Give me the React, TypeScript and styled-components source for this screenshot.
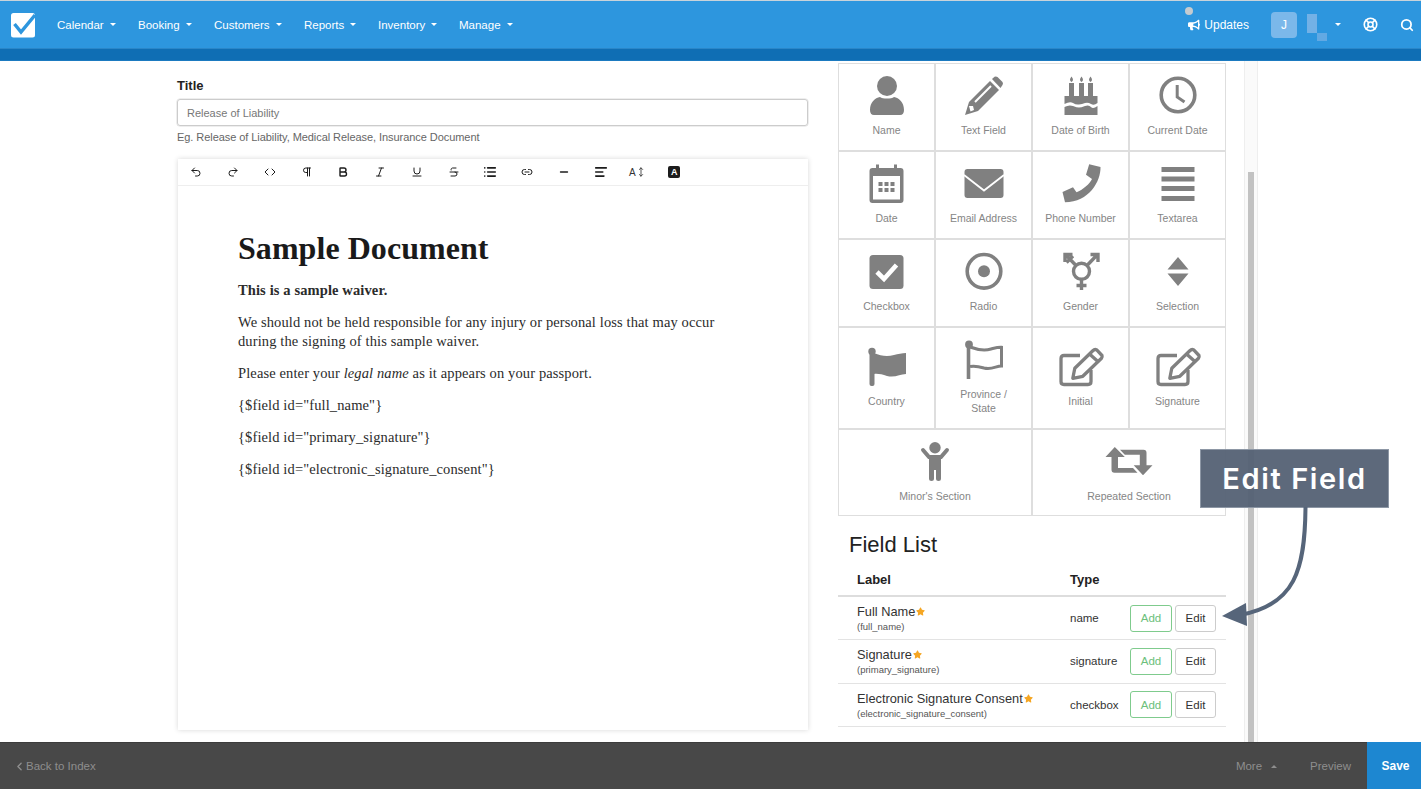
import React from "react";
import styled, { createGlobalStyle } from "styled-components";
import { Undo2, Redo2, Code, Pilcrow, Bold, Italic, Underline, Strikethrough, List, Link2, Minus, AlignLeft, LifeBuoy, Search, ChevronLeft, MoveVertical } from "lucide-react";
import { FaBullhorn, FaStar } from "react-icons/fa";

const Global = createGlobalStyle`
  html, body { margin: 0; padding: 0; background: #fff; }
  body { font-family: "Liberation Sans", Arial, sans-serif; color: #222; overflow: hidden; }
  * { box-sizing: border-box; }
`;

const Root = styled.div`
  position: relative; height: 789px; display: flex; flex-direction: column; overflow: hidden;
`;
const Nav = styled.header`
  height: 48px; flex: none; background: #2d96de; border-top: 1px solid #c9d3da;
  display: flex; align-items: center; padding-left: 11px; color: #fff;
`;
const Logo = styled.svg`width: 25px; height: 26px; margin-right: 21px; flex: none;`;
const Menu = styled.nav`display: flex; align-items: center;`;
const MenuItem = styled.span<{ $w: number }>`
  width: ${p => p.$w}px; font-size: 11.5px; display: flex; align-items: center; gap: 6px; white-space: nowrap;
`;
const Caret = styled.i<{ $up?: boolean; $c?: string }>`
  display: inline-block; width: 0; height: 0;
  border-left: 3.5px solid transparent; border-right: 3.5px solid transparent;
  ${p => p.$up ? `border-bottom: 3.5px solid ${p.$c || "#fff"};` : `border-top: 3.5px solid ${p.$c || "#fff"};`}
`;
const NavRight = styled.div`margin-left: auto; display: flex; align-items: center;`;
const Updates = styled.span`
  position: relative; display: flex; align-items: center; gap: 4px; font-size: 12px; margin-right: 22px;
`;
const Bubble = styled.i`
  position: absolute; left: -3px; top: -11px; width: 8px; height: 8px; border-radius: 50%; background: #c4cbd0;
`;
const Avatar = styled.span`
  width: 26px; height: 26px; border-radius: 4px; background: #7bb8ea; display: flex; align-items: center; justify-content: center;
  font-size: 12px; margin-right: 10px;
`;
const Mosaic = styled.span`
  position: relative; width: 20px; height: 26px; margin-right: 8px;
  &::before { content: ""; position: absolute; left: 0; top: 2px; width: 10px; height: 19px; background: #73b1e6; }
  &::after { content: ""; position: absolute; left: 10px; top: 21px; width: 10px; height: 8px; background: #62a9e3; }
`;
const NavIcon = styled.span<{ $mr: number }>`display: flex; margin-right: ${p => p.$mr}px;`;
const SubBar = styled.div`height: 13px; flex: none; background: #0f6eb4; border-top: 1px solid #2a86c8; border-bottom: 1px solid #1b7ac0;`;

const Main = styled.main`flex: 1; min-height: 0; display: flex; padding-left: 177px; overflow: hidden;`;
const LeftCol = styled.section`width: 631px; flex: none; padding-top: 17px; display: flex; flex-direction: column;`;
const Label = styled.div`font-size: 13px; font-weight: 700; line-height: 15px; color: #222; margin-bottom: 6px;`;
const TitleInput = styled.div`
  height: 27px; border: 1px solid #ccc; border-radius: 3px; padding: 0 9px; display: flex; align-items: center;
  font-size: 11px; color: #777; box-shadow: 0 0 0 .5px #ddd;
`;
const Help = styled.div`font-size: 11px; color: #666; line-height: 13px; margin-top: 5px; margin-bottom: 15px; letter-spacing: -.06px;`;
const Editor = styled.div`
  margin-left: 1px; height: 571px; background: #fff; box-shadow: 0 0 5px rgba(0,0,0,.16); display: flex; flex-direction: column;
`;
const Toolbar = styled.div`
  height: 27px; flex: none; display: flex; align-items: center; padding-left: 0; border-bottom: 1px solid #eee;
`;
const Tool = styled.span`
  width: 36.75px; display: flex; align-items: center; justify-content: center; color: #1c1c1c; font-size: 10px; font-weight: 700;
`;
const FontTool = styled(Tool)`gap: 0; font-weight: 400; color: #333;`;
const Highlight = styled.span`
  width: 12px; height: 12px; border-radius: 2px; background: #1c1c1c; color: #fff; font-size: 9px; font-weight: 700;
  display: flex; align-items: center; justify-content: center;
`;
const Doc = styled.div`
  padding: 44px 0 0 60px; font-family: "Liberation Serif", "Times New Roman", serif; color: #2b2b2b;
`;
const Heading = styled.h1`
  margin: 0 0 15px; font-size: 32px; line-height: 36px; font-weight: 700; color: #1a1a1a; letter-spacing: .05px;
`;
const Para = styled.p`
  margin: 0 0 13px; font-size: 14.5px; line-height: 19px; width: 490px; letter-spacing: .12px;
`;

const RightCol = styled.section`width: 388px; flex: none; margin-left: 30px; padding-top: 2px;`;
const Tiles = styled.div`
  display: grid; grid-template-columns: repeat(4, 97px); grid-template-rows: 88px 88px 88px 102px 87px;
`;
const Tile = styled.div<{ $wide?: boolean }>`
  grid-column: span ${p => p.$wide ? 2 : 1}; border: 1px solid #dedede;
  display: flex; flex-direction: column; align-items: center; justify-content: center; padding-bottom: 2px;
  color: #808080;
`;
const TileIcon = styled.svg`width: 40px; height: 40px; overflow: visible; flex: none; fill: #808080;`;
const TileLabel = styled.span`
  margin-top: 8px; font-size: 10.5px; line-height: 14px; text-align: center; color: #858585; white-space: pre-line;
`;
const ListTitle = styled.h2`
  margin: 18px 0 0 11px; font-size: 22px; line-height: 22px; font-weight: 400; color: #222;
`;
const THead = styled.div`
  margin-top: 13px; height: 28px; display: flex; align-items: flex-start; padding-left: 19px; border-bottom: 2px solid #ddd;
  font-size: 13px; font-weight: 700; color: #222; line-height: 15px; padding-top: 3px;
`;
const LabelCol = styled.div`width: 213px; flex: none;`;
const Row = styled.div`
  height: 43.3px; display: flex; align-items: center; padding-left: 19px; border-bottom: 1px solid #e3e3e3;
`;
const Name = styled.div`font-size: 12.8px; line-height: 15px; color: #333; display: flex; align-items: center; gap: 1px;`;
const Sub = styled.div`font-size: 9.5px; line-height: 11px; color: #555; margin-top: 2px;`;
const TypeCol = styled.div`width: 60px; flex: none; font-size: 11.5px; color: #333;`;
const Btn = styled.button<{ $add?: boolean }>`
  height: 27px; border-radius: 3px; background: #fff; font: 11.5px "Liberation Sans", Arial, sans-serif; padding: 0;
  width: ${p => p.$add ? 42 : 41}px; margin-left: ${p => p.$add ? 0 : 3}px;
  border: 1px solid ${p => p.$add ? "#7fcb8d" : "#ccc"}; color: ${p => p.$add ? "#6cc07b" : "#333"};
`;
const Track = styled.div`
  width: 14px; flex: none; margin-left: 18px; background: #fafafa; border-left: 1px solid #eee; border-right: 1px solid #eee;
  padding: 111px 3px 0;
`;
const Thumb = styled.div`height: 100%; background: #c2c2c2;`;

const Footer = styled.footer`
  height: 47px; flex: none; background: #484848; border-top: 1px solid #3c3c3c; display: flex; align-items: center;
  padding-left: 13px; font-size: 11.5px; color: #8e8e8e;
`;
const Back = styled.span`display: flex; align-items: center; gap: 0;`;
const More = styled.span`margin-left: auto; display: flex; align-items: center; gap: 9px; margin-right: 33px;`;
const Preview = styled.span`margin-right: 16px;`;
const Save = styled.span`
  width: 54px; align-self: stretch; background: #1d87d1; color: #fff; font-weight: 700; font-size: 12px;
  display: flex; align-items: center; justify-content: center; margin-top: -1px; padding-left: 3px;
`;

const Callout = styled.div`
  position: absolute; left: 1200px; top: 449px; width: 189px; height: 59px; background: rgba(84,97,116,.95);
  border: 1px solid #8d97a5; color: #fff; font-family: Inter, "Open Sans", sans-serif; font-weight: 600; font-size: 29px;
  display: flex; align-items: center; justify-content: center; letter-spacing: 1.6px;
`;
const Arrow = styled.svg`position: absolute; left: 1210px; top: 500px; width: 110px; height: 135px; overflow: visible;`;

type Ic = React.ReactNode;
const W = "#fff";
const G = "#808080";
const icons: Record<string, Ic> = {
  user: <><circle cx="20" cy="11" r="10" /><path d="M3 35C3 27 8 23 13 22C15.5 24 24.5 24 27 22C32 23 37 27 37 35Q37 40 33 40H7Q3 40 3 35Z" /></>,
  pencil: <><path d="M5 27L26 6L35 15L14 36L1 40Z" /><path d="M28 4L30.5 1.8Q32 1 33.5 2L38.5 7Q39.5 8.5 38.5 10L36.5 13Z" /><path d="M11 27L27 11" stroke={W} strokeWidth="2" fill="none" /><path d="M5 31L9 31L10 35L6.5 36.5Z" fill={W} /></>,
  cake: <>
    <rect x="8" y="8" width="5" height="14" /><rect x="18" y="8" width="5" height="14" /><rect x="27" y="8" width="5" height="14" />
    <path d="M10.5 1.5Q13.5 5 10.5 7Q7.5 5 10.5 1.5ZM20.5 1.5Q23.5 5 20.5 7Q17.5 5 20.5 1.5ZM29.5 1.5Q32.5 5 29.5 7Q26.5 5 29.5 1.5Z" />
    <path d="M3.5 21H36.5V28Q33 31 30 29T24 28T18 29.5T12 28T3.5 29Z" />
    <path d="M3.5 32Q8 29.5 12 31T18 32.5T24 31T30 32T36.5 31V40H3.5Z" />
  </>,
  clock: <><circle cx="20" cy="20" r="16.8" fill="none" stroke={G} strokeWidth="3.6" /><path d="M19.2 10V22L26.5 27" fill="none" stroke={G} strokeWidth="3" /></>,
  calendar: <>
    <path fillRule="evenodd" d="M5.5 5H9V1.5H12V5H27V1.5H30V5H33.5Q36.5 5 36.5 8V37Q36.5 40 33.5 40H5.5Q2.5 40 2.5 37V8Q2.5 5 5.5 5ZM6 13V36.5H33V13Z" />
    <path d="M11.5 19h4v4h-4zM17.5 19h4v4h-4zM23.5 19h4v4h-4zM11.5 25h4v4h-4zM17.5 25h4v4h-4zM23.5 25h4v4h-4z" />
  </>,
  envelope: <><rect x=".5" y="6" width="39" height="29" rx="3" /><path d="M0 12L20 27.5L40 12" fill="none" stroke={W} strokeWidth="1.8" /></>,
  phone: <path d="M28.2 1.3L39.5 4C40 18 28 39.3 4 39.3L1.5 29L12 24.3L15.5 29.3C21.5 27 29 20.7 31 16L25 11.7Z" />,
  lines: <path d="M3.5 4h33v5h-33zM3.5 13.5h33v5h-33zM3.5 23h33v5h-33zM3.5 33h33v5h-33z" />,
  check: <><rect x="2.5" y="4" width="34" height="34" rx="3.5" /><path d="M10 21L17 28L29.5 14" fill="none" stroke={W} strokeWidth="4.6" /></>,
  radio: <><circle cx="20" cy="20.3" r="16.8" fill="none" stroke={G} strokeWidth="3.6" /><circle cx="20" cy="20.3" r="6" /></>,
  gender: <g fill="none" stroke={G} strokeWidth="3.4">
    <circle cx="20.5" cy="20.3" r="8" />
    <path d="M26 14.5L36 4M29.5 3.5H37V11M15 14.5L5 4M4 11V3.5H11.5M5.5 11.5L12 5M20.5 28V39M15.5 34.5H25.5" />
  </g>,
  select: <path d="M20 6L30.5 18.5H9.5ZM9.5 22.5H30.5L20 35Z" />,
  flag: <><rect x="2.5" y="6" width="5" height="34" rx="2" /><circle cx="5" cy="5.5" r="3.7" /><path d="M7 7C14 10 20 11 27 9C31 8 35 7 39 7V28C33 28 28 32 20 30C15 28.5 11 27.5 7 28Z" /></>,
  flagO: <g fill="none" stroke={G} strokeWidth="3"><path d="M4.5 5V40" strokeWidth="3.6" /><path d="M6 8C14 11 20 12 27 10C31 9 34 8 37.5 8.3V27C32 27 28 31 20 29C15 27.5 11 26.5 6 27.5" /><circle cx="5" cy="5.5" r="2.4" fill={G} /></g>,
  edit: <g fill="none" stroke={G} strokeWidth="3.3">
    <path d="M19 9.5H3Q0 9.5 0 12.5V35.5Q0 38.5 3 38.5H27Q30 38.5 30 35.5V24" />
    <path d="M11.8 32.3L13.8 22.3L31.8 4.7Q33.5 3 35.5 3.7L41 9.5Q41.5 11 40.5 12.3L21.8 30.3Z" strokeLinejoin="round" />
    <path d="M28.5 8L37.2 15.7" />
  </g>,
  child: <>
    <circle cx="20" cy="6.7" r="5.7" />
    <path d="M8 9L14 16H26L32 9" fill="none" stroke={G} strokeWidth="4" strokeLinecap="round" />
    <path d="M14 15H26V37.5Q26 40 23.5 40T21 37.5V29H19V37.5Q19 40 16.5 40T14 37.5Z" />
  </>,
  retweet: <path d="M5.8 6L15.8 16H9V27H24L28.5 31.7H5.5Q2.5 31.7 2.5 28.7V16H-3.5ZM11 8.7H34.5Q37.5 8.7 37.5 11.7V24.3H43.5L34 34.3L24.7 24.3H30.8V13.7H15.8Z" />,
};

const tiles: { icon: string; label: string; wide?: boolean }[] = [
  { icon: "user", label: "Name" }, { icon: "pencil", label: "Text Field" }, { icon: "cake", label: "Date of Birth" }, { icon: "clock", label: "Current Date" },
  { icon: "calendar", label: "Date" }, { icon: "envelope", label: "Email Address" }, { icon: "phone", label: "Phone Number" }, { icon: "lines", label: "Textarea" },
  { icon: "check", label: "Checkbox" }, { icon: "radio", label: "Radio" }, { icon: "gender", label: "Gender" }, { icon: "select", label: "Selection" },
  { icon: "flag", label: "Country" }, { icon: "flagO", label: "Province /\nState" }, { icon: "edit", label: "Initial" }, { icon: "edit", label: "Signature" },
  { icon: "child", label: "Minor's Section", wide: true }, { icon: "retweet", label: "Repeated Section", wide: true },
];

const fields = [
  { name: "Full Name", id: "(full_name)", type: "name" },
  { name: "Signature", id: "(primary_signature)", type: "signature" },
  { name: "Electronic Signature Consent", id: "(electronic_signature_consent)", type: "checkbox" },
];

const menu: [string, number][] = [["Calendar", 81], ["Booking", 76], ["Customers", 90], ["Reports", 74], ["Inventory", 81], ["Manage", 60]];
const tools = [Undo2, Redo2, Code, Pilcrow, Bold, Italic, Underline, Strikethrough, List, Link2, Minus, AlignLeft];
const heavy = [4, 8, 10, 11];

export default function App() {
  return (
    <Root>
      <Global />
      <Nav>
        <Logo viewBox="0 0 25 26">
          <rect x="0" y="1" width="24" height="24.5" rx="2.5" fill="#fff" />
          <path d="M3.5 12L10 20L24 3" fill="none" stroke="#2d96de" strokeWidth="3.4" />
        </Logo>
        <Menu>
          {menu.map(([t, w]) => <MenuItem key={t} $w={w}>{t}<Caret /></MenuItem>)}
        </Menu>
        <NavRight>
          <Updates><Bubble /><FaBullhorn size={12} />Updates</Updates>
          <Avatar>J</Avatar>
          <Mosaic />
          <NavIcon $mr={22}><Caret /></NavIcon>
          <NavIcon $mr={22}><LifeBuoy size={15} strokeWidth={2.6} /></NavIcon>
          <NavIcon $mr={7}><Search size={14} strokeWidth={3} /></NavIcon>
        </NavRight>
      </Nav>
      <SubBar />
      <Main>
        <LeftCol>
          <Label>Title</Label>
          <TitleInput>Release of Liability</TitleInput>
          <Help>Eg. Release of Liability, Medical Release, Insurance Document</Help>
          <Editor>
            <Toolbar>
              {tools.map((I, i) => <Tool key={i}><I size={i === 11 || i === 8 ? 14 : 12} strokeWidth={heavy.includes(i) ? 2.8 : 2} /></Tool>)}
              <FontTool>A<MoveVertical size={10} /></FontTool>
              <Tool><Highlight>A</Highlight></Tool>
            </Toolbar>
            <Doc>
              <Heading>Sample Document</Heading>
              <Para><b>This is a sample waiver.</b></Para>
              <Para>We should not be held responsible for any injury or personal loss that may occur during the signing of this sample waiver.</Para>
              <Para>Please enter your <i>legal name</i> as it appears on your passport.</Para>
              <Para>{'{$field id="full_name"}'}</Para>
              <Para>{'{$field id="primary_signature"}'}</Para>
              <Para>{'{$field id="electronic_signature_consent"}'}</Para>
            </Doc>
          </Editor>
        </LeftCol>
        <RightCol>
          <Tiles>
            {tiles.map((t, i) => (
              <Tile key={i} $wide={t.wide}>
                <TileIcon viewBox="0 0 40 40">{icons[t.icon]}</TileIcon>
                <TileLabel>{t.label}</TileLabel>
              </Tile>
            ))}
          </Tiles>
          <ListTitle>Field List</ListTitle>
          <THead><LabelCol>Label</LabelCol><div>Type</div></THead>
          {fields.map(f => (
            <Row key={f.id}>
              <LabelCol>
                <Name>{f.name}<FaStar size={9} color="#f5a623" /></Name>
                <Sub>{f.id}</Sub>
              </LabelCol>
              <TypeCol>{f.type}</TypeCol>
              <Btn $add>Add</Btn>
              <Btn>Edit</Btn>
            </Row>
          ))}
        </RightCol>
        <Track><Thumb /></Track>
      </Main>
      <Footer>
        <Back><ChevronLeft size={13} strokeWidth={2.5} />Back to Index</Back>
        <More>More<Caret $up $c="#8e8e8e" /></More>
        <Preview>Preview</Preview>
        <Save>Save</Save>
      </Footer>
      <Callout>Edit Field</Callout>
      <Arrow viewBox="0 0 110 135">
        <path d="M95.5 7C95 70 85 105 30 115" fill="none" stroke="#56657a" strokeWidth="4" />
        <path d="M12 116L36 103L37 126Z" fill="#56657a" />
      </Arrow>
    </Root>
  );
}
